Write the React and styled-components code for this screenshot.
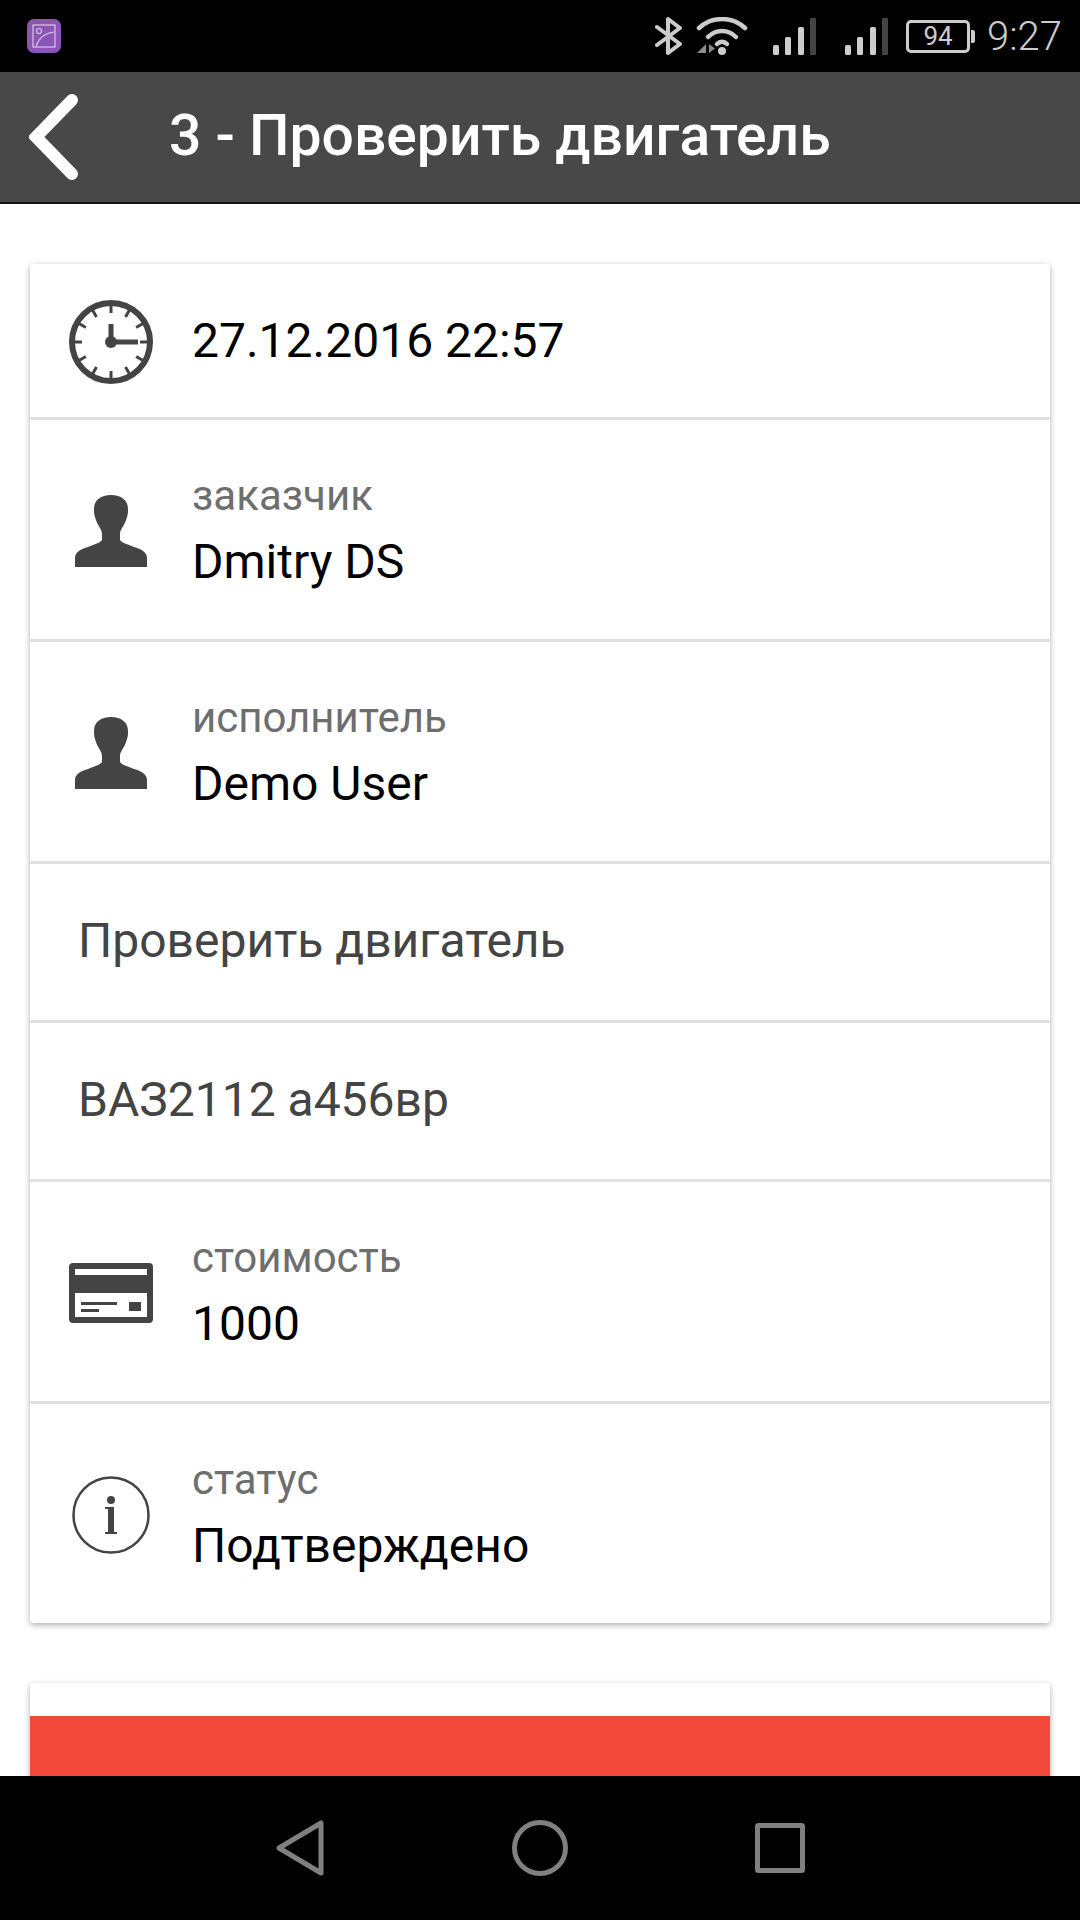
import React from "react";
import styled, { createGlobalStyle } from "styled-components";

const GlobalStyle = createGlobalStyle`
    html, body {
        margin: 0;
        padding: 0;
        background: #fff;
    }
`;

const Screen = styled.div`
    width: 1080px;
    height: 1920px;
    display: flex;
    flex-direction: column;
    overflow: hidden;
    font-family: Roboto, "Noto Sans", sans-serif;
    background: #fff;
`;

const StatusBar = styled.div`
    height: 72px;
    flex: none;
    background: #000;
    display: flex;
    align-items: center;
    padding: 0 18px 0 27px;
    box-sizing: border-box;
`;

const AppBadge = styled.div`
    width: 34px;
    height: 34px;
    border-radius: 7px;
    background: #8a55b5;
    display: flex;
    align-items: center;
    justify-content: center;
    margin-right: auto;
`;

const StatusIcons = styled.div`
    display: flex;
    align-items: center;
    color: #ccc;
`;

const Battery = styled.div`
    width: 64px;
    height: 33px;
    border: 3px solid #ccc;
    border-radius: 5px;
    box-sizing: border-box;
    display: flex;
    align-items: center;
    justify-content: center;
    font-size: 26px;
    color: #ccc;
    position: relative;
    margin-left: 18px;
    &::after {
        content: "";
        position: absolute;
        right: -8px;
        top: 7px;
        width: 4px;
        height: 13px;
        background: #ccc;
        border-radius: 0 2px 2px 0;
    }
`;

const Clock = styled.div`
    font-size: 40px;
    font-weight: 300;
    color: #ccc;
    margin-left: 17px;
`;

const Toolbar = styled.div`
    height: 132px;
    flex: none;
    box-sizing: border-box;
    background: #484848;
    border-bottom: 2px solid #141414;
    display: flex;
    align-items: center;
    padding-left: 29px;
`;

const Title = styled.div`
    font-size: 57px;
    font-weight: 500;
    color: #fff;
    margin: 0 0 4px 90px;
    white-space: nowrap;
`;

const Content = styled.div`
    flex: 1;
    min-height: 0;
    overflow: hidden;
    padding: 60px 30px 0;
    display: flex;
    flex-direction: column;
    gap: 60px;
`;

const Card = styled.div`
    flex: none;
    background: #fff;
    border-radius: 4px;
    box-shadow: 0 2px 6px rgba(0, 0, 0, 0.32);
    display: flex;
    flex-direction: column;
`;

const Row = styled.div`
    height: ${(p) => p.$height}px;
    flex: none;
    box-sizing: border-box;
    display: flex;
    align-items: center;
    padding-left: ${(p) => (p.$plain ? 48 : 39)}px;
    border-bottom: ${(p) => (p.$last ? "none" : "3px solid #e0e0e0")};
`;

const IconSlot = styled.div`
    width: 84px;
    flex: none;
    margin-right: 39px;
    padding-top: 2px;
    display: flex;
    justify-content: center;
    align-items: center;
    color: #444;
`;

const TextStack = styled.div`
    display: flex;
    flex-direction: column;
    gap: 13px;
    padding-top: 1px;
`;

const Label = styled.div`
    font-size: 42px;
    line-height: 50px;
    color: #6e6e6e;
`;

const Value = styled.div`
    font-size: 48px;
    line-height: 56px;
    color: #000;
`;

const PlainText = styled.div`
    font-size: 48px;
    color: #444;
    margin-bottom: 4px;
`;

const ActionCard = styled(Card)`
    padding-top: 33px;
`;

const RedButton = styled.div`
    height: 120px;
    background: #f2493b;
`;

const NavBar = styled.div`
    height: 144px;
    flex: none;
    background: #000;
    display: flex;
    justify-content: center;
    align-items: center;
`;

const NavButton = styled.div`
    width: 240px;
    display: flex;
    justify-content: center;
    color: #808080;
`;

const ImageGlyph = () => (
    <svg width="24" height="24" viewBox="0 0 24 24" fill="none" stroke="#d9c6e8" strokeWidth="1.2">
        <rect x="1" y="1" width="22" height="22" />
        <circle cx="7" cy="7" r="2.5" />
        <path d="M4 22C7 14 13 9 22 8" />
    </svg>
);

const BluetoothIcon = () => (
    <svg width="27" height="38" viewBox="0 0 27 38" fill="none" stroke="currentColor" strokeWidth="4" strokeLinecap="round" strokeLinejoin="round">
        <path d="M2 10 25 27 13 36V2l12 9L2 28" />
    </svg>
);

const WifiIcon = () => (
    <svg width="52" height="38" viewBox="0 0 52 38" fill="none" style={{ marginLeft: 14 }}>
        <g stroke="currentColor" strokeWidth="4.5" strokeLinecap="round">
            <path d="M3 11C16 -1 36 -1 49 11" />
            <path d="M12 20C20 12 32 12 40 20" />
            <path d="M21 27C24 24 28 24 31 27" />
        </g>
        <circle cx="26" cy="34" r="4" fill="currentColor" />
        <path d="M10 27v9H1zM13 27v9l6-4.500z" fill="#8a8a8a" />
    </svg>
);

const SignalIcon = ({ gap }) => (
    <svg width="43" height="37" viewBox="0 0 43 37" style={{ marginLeft: gap }}>
        <rect x="0" y="27" width="6" height="10" rx="1.500" fill="currentColor" />
        <rect x="12" y="19" width="6" height="18" rx="1.500" fill="currentColor" />
        <rect x="25" y="9" width="6" height="28" rx="1.500" fill="currentColor" />
        <rect x="37" y="0" width="6" height="37" rx="1" fill="#444" />
    </svg>
);

const ClockIcon = () => {
    const ticks = Array.from({ length: 12 }, (_, i) => i * 30);
    return (
        <svg width="84" height="84" viewBox="0 0 84 84" fill="none">
            <circle cx="42" cy="42" r="39" stroke="currentColor" strokeWidth="6" />
            {ticks.map((a) => (
                <line key={a} x1="42" y1="5" x2="42" y2="13" stroke="currentColor" strokeWidth="3" transform={`rotate(${a} 42 42)`} />
            ))}
            <path d="M42 24V42H69" stroke="currentColor" strokeWidth="5" />
            <circle cx="42" cy="42" r="6" fill="currentColor" />
        </svg>
    );
};

const PersonIcon = () => (
    <svg width="72" height="72" viewBox="0 0 72 72" fill="currentColor">
        <path d="M36 0C26 0 19 5 19 14c0 3 0 5 1 8 1 4 3 8 5 11 1 2 2 3 2 7v5c-2 3-7 4-14 7-7 2-13 5-13 11v9h72v-9c0-6-6-9-13-11-7-3-12-4-14-7v-5c0-4 1-5 2-7 2-3 4-7 5-11 1-3 1-5 1-8C53 5 46 0 36 0Z" />
    </svg>
);

const CreditCardIcon = () => (
    <svg width="84" height="60" viewBox="0 0 84 60">
        <rect width="84" height="60" rx="4" fill="currentColor" />
        <rect x="6" y="6" width="72" height="6" fill="#fff" />
        <rect x="6" y="30" width="72" height="24" fill="#fff" />
        <rect x="12" y="39" width="36" height="3" fill="currentColor" />
        <rect x="12" y="46" width="18" height="3" fill="currentColor" />
        <rect x="60" y="39" width="12" height="9" fill="currentColor" />
    </svg>
);

const InfoIcon = () => (
    <svg width="78" height="78" viewBox="0 0 78 78" fill="none">
        <circle cx="39" cy="39" r="37.500" stroke="currentColor" strokeWidth="2.500" />
        <circle cx="39" cy="24" r="4" fill="currentColor" />
        <path d="M33 31H42V56H45V58H33V56H36V33H33Z" fill="currentColor" />
    </svg>
);

const BackIcon = () => (
    <svg width="50" height="88" viewBox="0 0 50 88" fill="none">
        <path d="M43 7 7 44 43 81" stroke="#fff" strokeWidth="12" strokeLinecap="round" strokeLinejoin="miter" />
    </svg>
);

const NavBack = () => (
    <svg width="48" height="56" viewBox="0 0 48 56" fill="none" stroke="currentColor" strokeWidth="5" strokeLinejoin="round">
        <path d="M45 3V53L3 28Z" />
    </svg>
);

const NavHome = () => (
    <svg width="56" height="56" viewBox="0 0 56 56" fill="none" stroke="currentColor" strokeWidth="5">
        <circle cx="28" cy="28" r="25.500" />
    </svg>
);

const NavRecent = () => (
    <svg width="50" height="50" viewBox="0 0 50 50" fill="none" stroke="currentColor" strokeWidth="5" strokeLinejoin="round">
        <rect x="2.500" y="2.500" width="45" height="45" rx="1" />
    </svg>
);

const details = [
    { icon: <PersonIcon />, label: "заказчик", value: "Dmitry DS" },
    { icon: <PersonIcon />, label: "исполнитель", value: "Demo User" },
];

const App = () => {
    return (
        <Screen>
            <GlobalStyle />
            <StatusBar>
                <AppBadge>
                    <ImageGlyph />
                </AppBadge>
                <StatusIcons>
                    <BluetoothIcon />
                    <WifiIcon />
                    <SignalIcon gap={25} />
                    <SignalIcon gap={29} />
                    <Battery>94</Battery>
                    <Clock>9:27</Clock>
                </StatusIcons>
            </StatusBar>
            <Toolbar>
                <BackIcon />
                <Title>3 - Проверить двигатель</Title>
            </Toolbar>
            <Content>
                <Card>
                    <Row $height={156}>
                        <IconSlot>
                            <ClockIcon />
                        </IconSlot>
                        <Value>27.12.2016 22:57</Value>
                    </Row>
                    {details.map((d) => (
                        <Row $height={222} key={d.label}>
                            <IconSlot>{d.icon}</IconSlot>
                            <TextStack>
                                <Label>{d.label}</Label>
                                <Value>{d.value}</Value>
                            </TextStack>
                        </Row>
                    ))}
                    <Row $height={159} $plain>
                        <PlainText>Проверить двигатель</PlainText>
                    </Row>
                    <Row $height={159} $plain>
                        <PlainText>ВАЗ2112 а456вр</PlainText>
                    </Row>
                    <Row $height={222}>
                        <IconSlot>
                            <CreditCardIcon />
                        </IconSlot>
                        <TextStack>
                            <Label>стоимость</Label>
                            <Value>1000</Value>
                        </TextStack>
                    </Row>
                    <Row $height={219} $last>
                        <IconSlot>
                            <InfoIcon />
                        </IconSlot>
                        <TextStack>
                            <Label>статус</Label>
                            <Value>Подтверждено</Value>
                        </TextStack>
                    </Row>
                </Card>
                <ActionCard>
                    <RedButton />
                </ActionCard>
            </Content>
            <NavBar>
                <NavButton>
                    <NavBack />
                </NavButton>
                <NavButton>
                    <NavHome />
                </NavButton>
                <NavButton>
                    <NavRecent />
                </NavButton>
            </NavBar>
        </Screen>
    );
};

export default App;
